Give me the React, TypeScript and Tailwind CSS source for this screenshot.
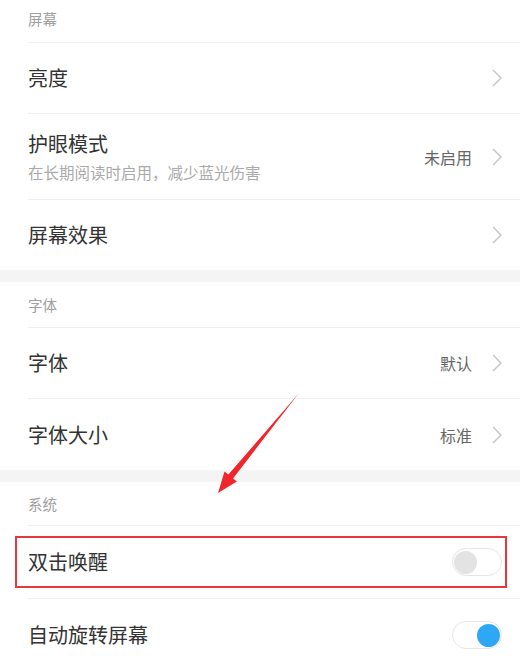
import { ReactNode } from 'react';

const font = { fontFamily: '"Noto Sans CJK SC", "Noto Sans", sans-serif' };

function Chevron() {
  return (
    <svg width="10" height="18" viewBox="0 0 10 18" className="shrink-0">
      <path d="M1 1 L9 9 L1 17" fill="none" stroke="#c4c4c4" strokeWidth="1.4" />
    </svg>
  );
}

function Toggle({ on }: { on: boolean }) {
  return (
    <div
      className={`w-[50px] h-[28px] rounded-full border border-[#e6e6e6] bg-white flex items-center px-[1px] ${
        on ? 'justify-end' : 'justify-start'
      }`}
    >
      <div className={`w-[23px] h-[23px] rounded-full ${on ? 'bg-[#2ea7f4]' : 'bg-[#e3e3e3]'}`} />
    </div>
  );
}

function Header({ title, h }: { title: string; h: string }) {
  return (
    <div className={`ml-[28px] border-b border-[#efefef] flex items-center ${h}`}>
      <span className="text-[14.5px] text-[#a0a0a0]">{title}</span>
    </div>
  );
}

function Row({
  title,
  sub,
  value,
  right,
  last,
  h = 'h-[71px]',
}: {
  title: string;
  sub?: string;
  value?: string;
  right?: ReactNode;
  last?: boolean;
  h?: string;
}) {
  return (
    <div
      className={`ml-[28px] pr-[18px] flex items-center justify-between ${h} ${
        last ? '' : 'border-b border-[#efefef]'
      }`}
    >
      <div className="flex flex-col">
        <span className="text-[20px] leading-[28px] text-[#333]">{title}</span>
        {sub && <span className="text-[15.5px] leading-[22px] text-[#aaa] mt-[3px]">{sub}</span>}
      </div>
      <div className="flex items-center gap-[20px]">
        {value && <span className="text-[16px] text-[#666]">{value}</span>}
        {right ?? <Chevron />}
      </div>
    </div>
  );
}

export default function App() {
  return (
    <div className="relative w-[520px] h-[667px] overflow-hidden bg-white" style={font}>
      <Header title="屏幕" h="h-[43px] pb-[4px]" />
      <Row title="亮度" />
      <Row title="护眼模式" sub="在长期阅读时启用，减少蓝光伤害" value="未启用" h="h-[86px]" />
      <Row title="屏幕效果" last h="h-[70px]" />
      <div className="h-[12px] bg-[#f4f4f4]" />

      <Header title="字体" h="h-[46px]" />
      <Row title="字体" value="默认" />
      <Row title="字体大小" value="标准" last />
      <div className="h-[12px] bg-[#f4f4f4]" />

      <Header title="系统" h="h-[44px]" />
      <div className="relative">
        <Row title="双击唤醒" right={<Toggle on={false} />} h="h-[73px]" />
        <div className="absolute left-[15px] right-[13px] top-[10px] bottom-[11px] border-2 border-[#e8383d] pointer-events-none" />
      </div>
      <Row title="自动旋转屏幕" right={<Toggle on />} last h="h-[72px]" />

      <svg
        className="absolute left-0 top-0 pointer-events-none"
        width="520"
        height="667"
        viewBox="0 0 520 667"
      >
        <polygon
          points="299.4,392.6 298.6,393.4 228.4,474.6 224.5,471.4 218,493 236.9,481.6 233,478.4"
          fill="#f0262c"
        />
      </svg>
    </div>
  );
}
